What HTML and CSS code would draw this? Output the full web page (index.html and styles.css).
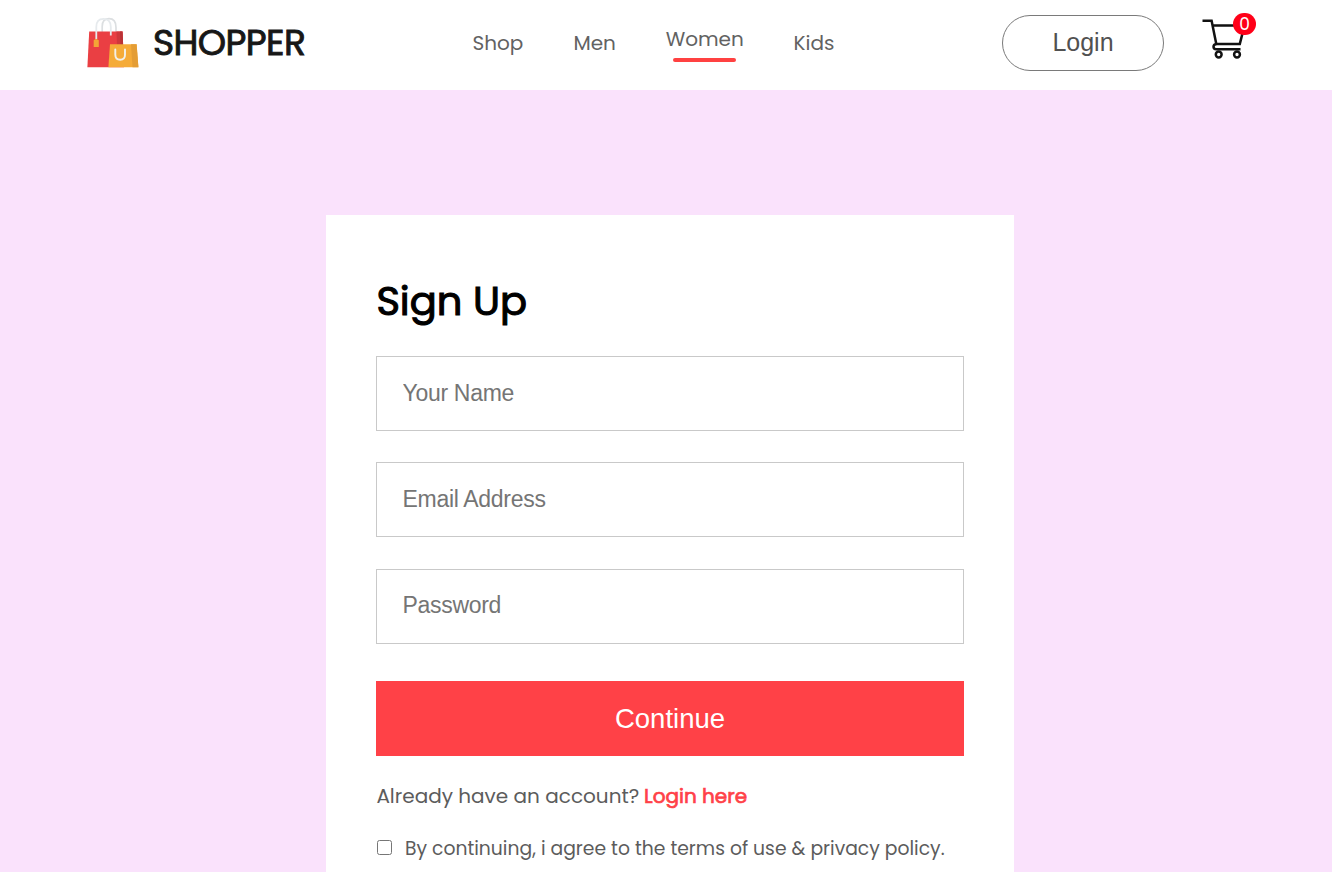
FILE: index.html
```html
<!DOCTYPE html>
<html lang="en">
<head>
<meta charset="utf-8">
<title>Shopper</title>
<link rel="stylesheet" href="styles.css">
</head>
<body>
<header class="navbar">
  <a class="brand">
    <svg class="brand-logo" width="56" height="54" viewBox="0 0 56 54">
      <path d="M16.200 16V10.500Q16.200 2.700 23 2.700Q30 2.700 30 11.500V16" fill="none" stroke="#dcdfe1" stroke-width="1.700"/>
      <path d="M3.200 15.400H36.500L38 51.200H1.400Z" fill="#ea3f43"/>
      <path d="M30.500 15.400H36.500L37.200 30H31Z" fill="#cf383c"/>
      <path d="M34 15.400H36.500L37.200 30H34.500Z" fill="#b93236"/>
      <path d="M10.300 23V11Q10.300 2.900 17.500 2.900T24.800 11V19.500" fill="none" stroke="#e6eaed" stroke-width="1.800"/>
      <path d="M24 28.200H50.600L52.400 51.200H22.400Z" fill="#f5ab38"/>
      <path d="M45 28.200H50.600L52.400 51.200H46.500Z" fill="#e49d35"/>
      <path d="M7.700 24.300L10 22.800L12.800 24.300V31H7.700Z" fill="#f3a536"/>
      <path d="M29.300 33.500V38.500Q29.300 43.800 34.200 43.800T39 38.500V33.500" fill="none" stroke="#f3f0e8" stroke-width="1.900" stroke-linecap="round"/>
    </svg>
    <span class="brand-name">SHOPPER</span>
  </a>
  <nav class="menu">
    <a class="menu-item shop">Shop</a>
    <a class="menu-item men">Men</a>
    <a class="menu-item women">Women<span class="underline"></span></a>
    <a class="menu-item kids">Kids</a>
  </nav>
  <div class="actions">
    <button class="login-button">Login</button>
    <div class="cart">
      <svg class="cart-icon" width="46" height="45" viewBox="0 0 46 45" fill="none" stroke="#111" stroke-width="2.500">
        <path d="M.5 5.800H9.600L14.300 28.900H37.800L42.500 10.600H11"/>
        <path d="M14.300 28.900Q11.500 29.400 11.500 31.700T14.300 34.200H38.500"/>
        <circle cx="16.700" cy="39.500" r="2.900"/>
        <circle cx="35" cy="39.500" r="2.900"/>
      </svg>
      <span class="cart-count">0</span>
    </div>
  </div>
</header>
<main class="page">
  <form class="card">
    <h1 class="title">Sign Up</h1>
    <div class="fields">
      <input class="field" type="text" placeholder="Your Name">
      <input class="field" type="email" placeholder="Email Address">
      <input class="field" type="password" placeholder="Password">
    </div>
    <button class="continue" type="button">Continue</button>
    <p class="account"><span class="account-text">Already have an account?</span><a class="account-link">Login here</a></p>
    <label class="agree"><input class="agree-box" type="checkbox"><span class="agree-text">By continuing, i agree to the terms of use &amp; privacy policy.</span></label>
  </form>
</main>
</body>
</html>
```
FILE: styles.css
```css
* { box-sizing: border-box; }

body {
  margin: 0;
  height: 872px;
  overflow: hidden;
  display: flex;
  flex-direction: column;
  background: #fff;
  color: #5c5c5c;
  font-family: Poppins, Inter, sans-serif;
}

.navbar {
  flex: none;
  height: 90px;
  padding: 0 76px 0 86px;
  display: grid;
  grid-template-columns: 386.500px 529.500px 1fr;
}

.brand {
  display: flex;
  gap: 11px;
  padding-top: 16px;
}

.brand-name {
  color: #171717;
  font-size: 36px;
  font-weight: 400;
  line-height: 54px;
  letter-spacing: -.6px;
  -webkit-text-stroke: .9px #171717;
}

.menu {
  display: flex;
  align-items: flex-start;
  padding-top: 28px;
  gap: 50px;
}

.menu-item {
  font-size: 20px;
  line-height: 30px;
  color: #626262;
  white-space: nowrap;
}

.shop { width: 51px; }
.men { width: 42.500px; }
.women {
  width: 77.500px;
  margin-top: -4px;
  display: flex;
  flex-direction: column;
  align-items: center;
}
.kids { width: 42px; }

.underline {
  width: 63px;
  height: 4px;
  margin: 4px 1px 0 0;
  border-radius: 10px;
  background: #ff4141;
}

.actions {
  display: flex;
  align-items: flex-start;
  padding-top: 15px;
  gap: 38px;
}

.login-button {
  width: 162px;
  height: 56px;
  padding: 0 0 2px;
  border: 1px solid #7a7a7a;
  border-radius: 75px;
  background: #fff;
  color: #515151;
  font: 25px/52px "Liberation Sans", Arial, sans-serif;
}

.cart {
  position: relative;
  width: 54px;
  height: 46px;
}

.cart-icon { display: block; }

.cart-count {
  position: absolute;
  left: 31px;
  top: -2px;
  width: 23px;
  height: 22px;
  border-radius: 11px;
  background: #ff0018;
  color: #fff;
  font-size: 17px;
  line-height: 22px;
  text-align: center;
}

.page {
  flex: 1;
  min-height: 0;
  display: flex;
  padding: 125px 0 0 326px;
  background: #fae2fc;
}

.card {
  width: 688px;
  padding: 60px 50px 0;
  background: #fff;
}

.title {
  margin: 0;
  height: 81px;
  color: #000;
  font-size: 40px;
  font-weight: 400;
  line-height: 53px;
  text-indent: .4px;
  -webkit-text-stroke: 1.100px #000;
}

.fields {
  display: flex;
  flex-direction: column;
  gap: 31.400px;
}

.field {
  width: 100%;
  height: 75px;
  padding: 0 0 1px 25.500px;
  border: 1px solid #c9c9c9;
  border-radius: 0;
  color: #5c5c5c;
  font: 23px "Liberation Sans", Arial, sans-serif;
  letter-spacing: -.3px;
}

.field::placeholder { color: #757575; }

.continue {
  display: block;
  width: 100%;
  height: 75px;
  margin-top: 37.200px;
  padding: 1px 0 0;
  border: 0;
  background: #ff4147;
  color: #fff;
  font: 27.500px "Liberation Sans", Arial, sans-serif;
}

.account {
  display: flex;
  margin: 25px 0 0;
  font-size: 20px;
  line-height: 30px;
  white-space: nowrap;
}

.account-text {
  width: 268px;
  text-indent: .4px;
}

.account-link {
  color: #ff4147;
  -webkit-text-stroke: .7px #ff4147;
}

.agree {
  display: flex;
  margin-top: 23px;
  white-space: nowrap;
}

.agree-box {
  width: 15px;
  height: 15px;
  margin: 6px 13.500px 0 .5px;
}

.agree-text {
  font-size: 18.750px;
  line-height: 29px;
}
```
